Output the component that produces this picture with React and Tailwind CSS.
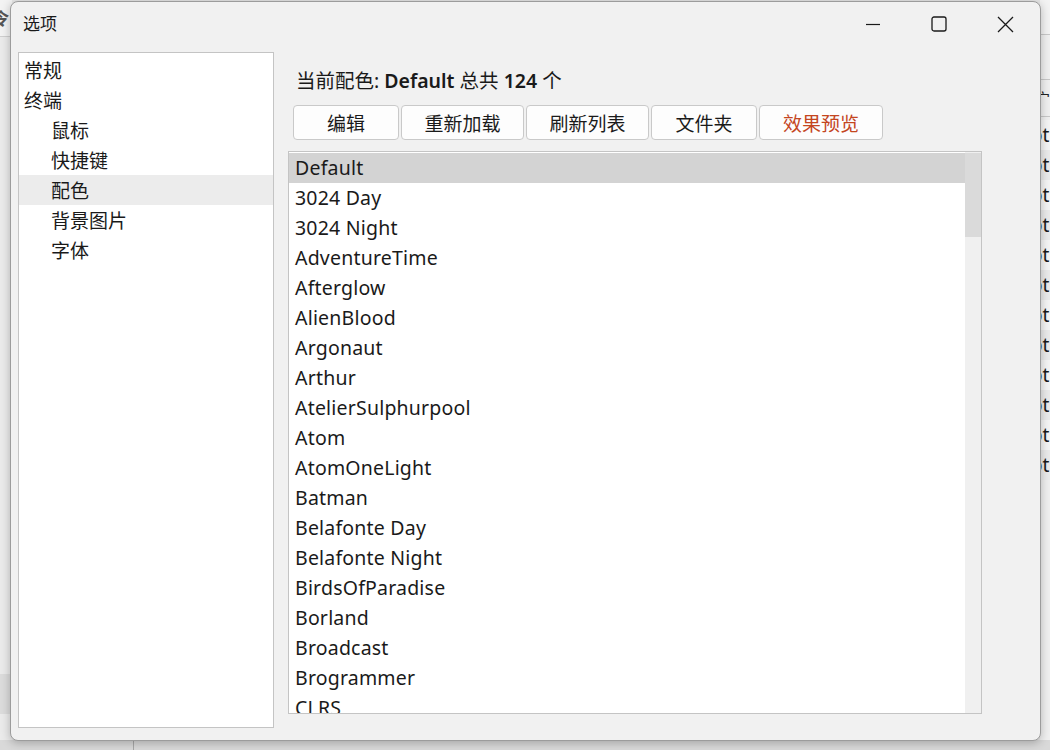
import React from "react";

const font = { fontFamily: '"Noto Sans", "Noto Sans CJK SC", sans-serif' };

const tree = [
  { label: "常规", level: 0 },
  { label: "终端", level: 0 },
  { label: "鼠标", level: 1 },
  { label: "快捷键", level: 1 },
  { label: "配色", level: 1, selected: true },
  { label: "背景图片", level: 1 },
  { label: "字体", level: 1 },
];

const buttons = [
  { label: "编辑", w: "w-[106px]" },
  { label: "重新加载", w: "w-[123px]" },
  { label: "刷新列表", w: "w-[123px]" },
  { label: "文件夹", w: "w-[106px]" },
  { label: "效果预览", w: "w-[124px]", accent: true },
];

const schemes = [
  "Default",
  "3024 Day",
  "3024 Night",
  "AdventureTime",
  "Afterglow",
  "AlienBlood",
  "Argonaut",
  "Arthur",
  "AtelierSulphurpool",
  "Atom",
  "AtomOneLight",
  "Batman",
  "Belafonte Day",
  "Belafonte Night",
  "BirdsOfParadise",
  "Borland",
  "Broadcast",
  "Brogrammer",
  "CLRS",
  "Chalk",
];

function TitleButtons() {
  return (
    <div className="flex h-full">
      <div className="flex w-[66px] items-center justify-center">
        <svg width="16" height="16" viewBox="0 0 16 16">
          <path d="M1 8.5h14" stroke="#1a1a1a" strokeWidth="1.2" />
        </svg>
      </div>
      <div className="flex w-[66px] items-center justify-center">
        <svg width="16" height="16" viewBox="0 0 16 16">
          <rect x="1" y="1" width="14" height="14" rx="2" fill="none" stroke="#1a1a1a" strokeWidth="1.3" />
        </svg>
      </div>
      <div className="flex w-[66px] items-center justify-center">
        <svg width="17" height="17" viewBox="0 0 17 17">
          <path d="M1 1l15 15M16 1L1 16" stroke="#1a1a1a" strokeWidth="1.3" />
        </svg>
      </div>
    </div>
  );
}

function Backdrop() {
  return (
    <>
      {/* left strip of the window behind */}
      <div className="absolute left-0 top-0 h-[750px] w-[12px] bg-[#ebebeb]">
        <div className="h-[37px] border-b border-[#cfcfcf] bg-[#f3f3f3] pt-[8px] text-[17px] font-bold leading-[22px] text-[#555]">
          <span className="ml-[-8px]">令</span>
        </div>
        <div className="mt-[637px] h-[40px] bg-[#dcdcdc]" />
      </div>
      {/* right strip of the window behind */}
      <div className="absolute left-[1040px] top-0 h-[750px] w-[10px] overflow-hidden bg-[#f0f0f0]">
        <div className="h-[35px] border-b border-[#c8c8c8] bg-[#f3f3f3]" />
        <div className="h-[45px] border-b border-[#c8c8c8]" />
        <div className="h-[37px] border-b border-[#c8c8c8] text-[14px] leading-[36px] text-[#222]">
          <span className="ml-[-4px]">宀</span>
        </div>
        <div className="pt-[3px] text-[19px] leading-[30px] text-[#1a1a1a]">
          {Array.from({ length: 12 }).map((_, i) => (
            <div key={i} className={i % 2 ? "bg-[#ebebeb]" : "bg-[#f5f5f5]"}>
              <span className="ml-[-9px] whitespace-nowrap">ot</span>
            </div>
          ))}
        </div>
      </div>
      {/* bottom strip */}
      <div className="absolute left-0 top-[740px] h-[10px] w-[1050px] bg-[#d9d9d9]">
        <div className="ml-[133px] h-full w-px bg-[#a8a8a8]" />
      </div>
    </>
  );
}

export default function App() {
  return (
    <div className="relative h-[750px] w-[1050px] overflow-hidden bg-[#e6e6e6]" style={font}>
      <Backdrop />

      <div className="absolute left-[10px] top-px flex h-[740px] w-[1031px] flex-col rounded-[8px] border border-[#9c9c9c] bg-[#f1f1f1] text-[#1a1a1a] shadow-[0_2px_10px_rgba(0,0,0,0.25)]">
        {/* title bar */}
        <div className="flex h-[50px] shrink-0 items-start justify-between">
          <div className="pl-[12px] pt-[10px] text-[17px] leading-[24px]">选项</div>
          <div className="mr-[2px] h-[44px]">
            <TitleButtons />
          </div>
        </div>

        {/* body */}
        <div className="flex flex-1 pl-[7px]">
          <div className="h-[676px] w-[256px] border border-[#c4c4c4] bg-white pt-[2px] text-[19px]">
            {tree.map((item) => (
              <div
                key={item.label}
                className={`h-[30px] leading-[33px] ${item.level ? "pl-[32px]" : "pl-[5px]"} ${item.selected ? "bg-[#ececec]" : ""}`}
              >
                {item.label}
              </div>
            ))}
          </div>

          <div className="ml-[14px] flex flex-col">
            <div className="pl-[8px] pt-[16px] text-[19.5px] leading-[25px]">
              当前配色: <span className="font-semibold">Default</span> 总共{" "}
              <span className="font-semibold">124</span> 个
            </div>

            <div className="mt-[12px] flex gap-[2px] pl-[5px]">
              {buttons.map((b) => (
                <div
                  key={b.label}
                  className={`${b.w} flex h-[35px] items-center justify-center rounded-[4px] border border-[#c9c9c9] bg-[#fdfdfd] pt-[3px] text-[19px] ${
                    b.accent ? "text-[#c4461f]" : ""
                  }`}
                >
                  {b.label}
                </div>
              ))}
            </div>

            <div className="mt-[11px] flex h-[563px] w-[694px] overflow-hidden border border-[#c4c4c4] bg-white">
              <div className="flex-1 pt-px text-[19.5px] leading-[30px] tracking-[0.2px]">
                {schemes.map((s, i) => (
                  <div key={s} className={`pl-[6px] ${i === 0 ? "bg-[#d3d3d3]" : ""}`}>
                    {s}
                  </div>
                ))}
              </div>
              <div className="w-[16px] bg-[#f0f0f0] pt-px">
                <div className="h-[84px] bg-[#dadada]" />
              </div>
            </div>
          </div>
        </div>
      </div>
    </div>
  );
}
